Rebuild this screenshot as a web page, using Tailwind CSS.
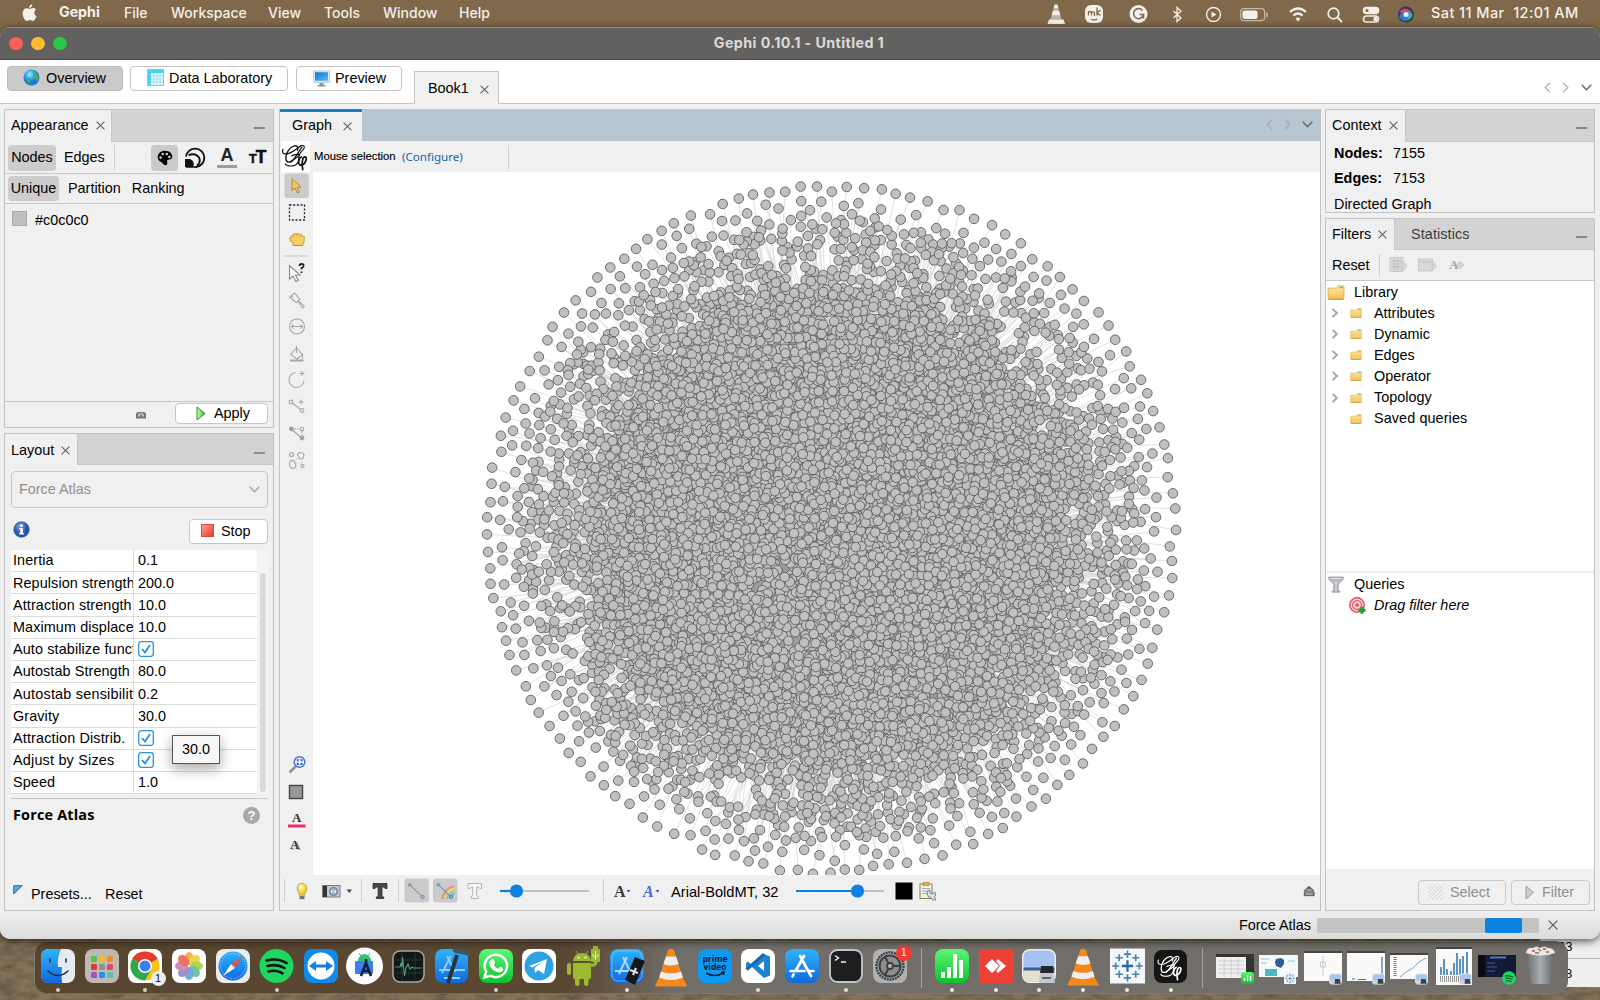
<!DOCTYPE html>
<html lang="en">
<head>
<meta charset="utf-8">
<title>Gephi 0.10.1 - Untitled 1</title>
<script src="https://cdn.jsdelivr.net/npm/@tailwindcss/browser@4"></script>
</head>
<body class="relative flex h-[1000px] w-[1600px] flex-col overflow-hidden bg-[#6e5a41] font-['Liberation_Sans',sans-serif] text-[14.4px] leading-none text-black">

<svg width="0" height="0" class="absolute">
  <defs>
    <filter id="rock" x="0" y="0" width="100%" height="100%"><feTurbulence type="fractalNoise" baseFrequency=".06 .12" numOctaves="4" seed="4"/><feColorMatrix values="0 0 0 0 .12  0 0 0 0 .09  0 0 0 0 .05  1.8 0 0 0 -.6"/></filter>
    <linearGradient id="gSky" x1="0" y1="0" x2="0" y2="1"><stop offset="0" stop-color="#2fb4f8"/><stop offset="1" stop-color="#1068e0"/></linearGradient>
    <linearGradient id="gGreen" x1="0" y1="0" x2="0" y2="1"><stop offset="0" stop-color="#5df777"/><stop offset="1" stop-color="#0cc22c"/></linearGradient>
    <linearGradient id="gFold" x1="0" y1="0" x2="0" y2="1"><stop offset="0" stop-color="#fde9a4"/><stop offset="1" stop-color="#f2c055"/></linearGradient>
    <linearGradient id="gTri" x1="0" y1="0" x2="1" y2="0"><stop offset="0" stop-color="#d2ffb0"/><stop offset="1" stop-color="#35b52a"/></linearGradient>
    <radialGradient id="gGlobe" cx=".4" cy=".3"><stop offset="0" stop-color="#a5ecff"/><stop offset=".55" stop-color="#36a8f2"/><stop offset="1" stop-color="#1b7ad6"/></radialGradient>
    <radialGradient id="gInfo" cx=".4" cy=".3"><stop offset="0" stop-color="#6ea2ee"/><stop offset="1" stop-color="#2450ac"/></radialGradient>
    <linearGradient id="gRed" x1="0" y1="0" x2="1" y2="1"><stop offset="0" stop-color="#ffa79b"/><stop offset="1" stop-color="#ea3020"/></linearGradient>
    <linearGradient id="gScreen" x1="0" y1="0" x2="1" y2="1"><stop offset="0" stop-color="#1a6fd0"/><stop offset="1" stop-color="#4cc4f8"/></linearGradient>
    <radialGradient id="gBulb" cx=".4" cy=".35"><stop offset="0" stop-color="#fffbc0"/><stop offset="1" stop-color="#f0cf2c"/></radialGradient>
    <linearGradient id="gTrash" x1="0" x2="1"><stop offset="0" stop-color="#6c7175"/><stop offset=".5" stop-color="#a8adb0"/><stop offset="1" stop-color="#62676b"/></linearGradient>
    <symbol id="x" viewBox="0 0 10 10"><path d="M.6.600l8.800 8.800M9.400.600L.6 9.400" stroke="#5e5e5e" stroke-width="1.200" fill="none"/></symbol>
    <symbol id="min" viewBox="0 0 12 4"><path d="M0 2h11" stroke="#6d6d6d" stroke-width="1.300"/></symbol>
    <symbol id="chev" viewBox="0 0 8 10"><path d="M1.500.800L6 5 1.500 9.200" stroke="#a2a2a2" stroke-width="1.800" fill="none"/></symbol>
    <symbol id="folder" viewBox="0 0 18 15"><path d="M1 3.500V13.500q0 .8.8.8h14.400q.8 0 .8-.8V1.800q0-1-.9-1h-4.500q-.8 0-1.100 1l-.4 1.300H1.800Q1 3.100 1 3.900z" fill="url(#gFold)" stroke="#dfb04e" stroke-width=".8"/><path d="M1.500 14.300h15" stroke="#c9963a"/><path d="M12.500 2.500h3.500" stroke="#5bb8b0" stroke-width="1.400"/></symbol>
    <symbol id="gephi" viewBox="0 0 30 30"><g fill="none" stroke="currentColor" stroke-linecap="round"><path d="M17 8.500C18 5 16.500 3.500 14 4 9 5 5 11 5 16.500s4 5 7 2.500c3-2.500 6-9 9.500-13.500" stroke-width="1.400"/><path d="M2 7.500c-2 5 3 6 8 3.500S17.500 5.500 20.500 4c2.500-1 4 0 3.500 2-.8 3-5 4-5.500 9 0 4-1.500 8-4 9-4 1.500-9.500 1-10-1.500" stroke-width="1.200"/><path d="M11 14.500c3-2 6-1.500 7.500-1.800M10 21c3-3.500 7-4.500 9-7.500" stroke-width="1.100"/><path d="M21 15.500c-3 1-4 8.500-.5 8.500 4.500 0 7.500-8.500 4.300-8.500-2.800 0-3.800 7-2.300 13" stroke-width="1.800"/></g></symbol>
    <symbol id="vlc" viewBox="0 0 34 40"><path d="M5 31h24l4 7.500q.3 1-.8 1H1.800q-1.100 0-.8-1z" fill="#f38a1b"/><path d="M14 3q3-2.500 6 0l9.500 30q-12 6.500-25 0z" fill="#f5881c"/><path d="M12 9.500h10l2.700 7.500q-7.500 3-15.300 0zM7 24.500q10 4 20 0l2 6q-12 5-24 0z" fill="#efeeec"/></symbol>
    <symbol id="pv" viewBox="0 0 14 12"><rect x=".5" y=".5" width="13" height="11" rx="2.500" fill="#a9c4ee" stroke="#dfe6f0"/><path d="M1 7.500h12v3H1z" fill="#d8d5cf"/><path d="M6.500 6h5l1 5H6z" fill="#3a414c"/></symbol>
    <symbol id="tab" viewBox="0 0 34 34"><g stroke="#2b6a9e" stroke-width="2.200"><path d="M17 11.500v11M11.500 17h11"/><g stroke-width="1.600" stroke="#4484b5"><path d="M17 2v7M13.500 5.500h7M17 25v7M13.500 28.500h7M5.500 13.500v7M2 17h7M28.500 13.500v7M25 17h7M9 5.500v7M5.500 9h7M25 5.500v7M21.500 9h7M9 21.500v7M5.500 25h7M25 21.500v7M21.500 25h7"/></g></g></symbol>
  </defs>
</svg>
<svg class="absolute inset-0 -z-0" width="1600" height="1000"><rect width="1600" height="1000" fill="#7d684a"/><rect y="935" width="1600" height="65" fill="#86735a"/><rect y="935" width="1600" height="65" filter="url(#rock)"/></svg>

<!-- menu bar -->
<header class="relative flex h-[27px] shrink-0 items-center bg-[#80684a] pb-[2px] font-['Inter',sans-serif] text-[14px] font-medium text-[#f4f0ea]">
  <div class="flex w-[59px] pl-[22px]"><svg width="15" height="18" viewBox="0 0 15 18" fill="#f4f0ea"><path d="M10.300.2c.1 1.900-1.400 3.700-3.200 3.700C6.900 2.100 8.500.4 10.300.2zM7.500 4.900c.9 0 1.800-.9 3.400-.9 1.200 0 2.400.6 3.200 1.700-2.700 1.600-2.300 5.400.5 6.500-.8 2.100-2.200 4.600-3.700 4.700-1.200 0-1.600-.8-3-.8-1.500 0-1.900.8-3 .8C3 16.900.6 12.700.6 9.500.6 6 2.700 4.200 4.700 4.200c1.300 0 2 .7 2.800.7z"/></svg></div>
  <span class="w-[65px] text-[14.200px] font-bold">Gephi</span><span class="w-[47px]">File</span><span class="w-[97px]">Workspace</span><span class="w-[56px]">View</span><span class="w-[59px]">Tools</span><span class="w-[76px]">Window</span><span class="w-[587px]">Help</span>
  <svg width="372" height="24" viewBox="1046 -1 372 24" fill="none" stroke="#f4f0ea" stroke-width="1.500">
    <g fill="#f4f0ea" stroke="none"><path d="M1054.500 2.500h3l1 4h-5zM1052.800 9h6.400l1.300 4.500h-9zM1049 17.500h14.500l1.500 4.500h-17.500z"/><path d="M1053.500 6.500h5l.7 2.500h-6.400zM1051.500 13.500h9l1 4h-11z" opacity=".55"/><rect x="1085" y="3" width="18" height="18" rx="6"/><circle cx="1138.500" cy="12" r="9"/></g>
    <path d="M1088.500 13.500v-4.500m0 1.500q3-2.500 3 .5v2.500m0-2.500q3-2.500 3 .5v2.500M1097 5.500v8m3.500-5.500l-3.500 3 3.500 2.500M1091 17q3 2 6.500 0" stroke="#80684a" stroke-width="1.300"/>
    <path d="M1142.500 8.500a5 5 0 1 0 1 4h-4M1143.500 12.500v4" stroke="#80684a" stroke-width="1.500"/>
    <path d="M1173.500 9l7.500 7-4 3.500V5.500l4 3.500-7.500 7" stroke-width="1.300"/>
    <circle cx="1213.500" cy="12.500" r="7" stroke-width="1.400"/><path d="M1211.500 9.500v6l5-3z" fill="#f4f0ea" stroke="none"/>
    <rect x="1240.700" y="6.700" width="24" height="12" rx="3.500" stroke="#c5b8a6" stroke-width="1.200"/><rect x="1242.500" y="8.500" width="15" height="8.500" rx="2" fill="#f4f0ea" stroke="none"/><path d="M1267 10.500v4.500" stroke="#c5b8a6"/>
    <g stroke-width="2.200"><path d="M1290 10q8-7 16 0M1293.300 13.500q4.700-4 9.400 0"/></g><path d="M1295.500 16.500l2.500 3 2.500-3q-2.500-1.800-5 0z" fill="#f4f0ea" stroke="none"/>
    <circle cx="1333.500" cy="11.500" r="5.300" stroke-width="1.700"/><path d="M1337.500 15.500l4.500 4.500" stroke-width="2"/>
    <rect x="1363.500" y="5.500" width="15" height="6" rx="3" fill="#f4f0ea"/><circle cx="1367" cy="8.500" r="1.600" fill="#80684a" stroke="none"/><rect x="1363.500" y="14" width="15" height="6" rx="3"/><circle cx="1375.500" cy="17" r="2.200" fill="#f4f0ea" stroke="none"/>
    <g stroke="none"><circle cx="1406" cy="12.500" r="8" fill="#3a3560"/><path d="M1399 10q6-7 13 0-5 3-13 0z" fill="#c84a78"/><path d="M1399 15q2-6 7-3 5 4 1 7-5 1-8-4z" fill="#2a7fd0"/><path d="M1407 11q5-2 5.500 2-1 4-4.500 5z" fill="#37b3a0"/><circle cx="1406" cy="12.500" r="2.500" fill="#d7f4ff"/></g>
  </svg>
  <span class="ml-[13px] whitespace-pre pt-[1px] text-[14.500px] tracking-[.42px]">Sat 11 Mar  12:01 AM</span>
</header>

<!-- application window -->
<div class="relative z-10 flex h-[912px] shrink-0 flex-col overflow-hidden rounded-[10px] bg-[#f0f0f0] shadow-[0_2px_8px_rgba(0,0,0,.7)]">
  <div class="relative flex h-[33px] shrink-0 items-center justify-center border-y border-t-[#8f8c88] border-b-[#4d4c4a] bg-[#62615f]">
    <div class="absolute left-[9px] flex gap-[8.500px]"><i class="size-[13.500px] rounded-full bg-[#fe5f57]"></i><i class="size-[13.500px] rounded-full bg-[#febb2e]"></i><i class="size-[13.500px] rounded-full bg-[#28c840]"></i></div>
    <span class="pb-[1px] pr-[2px] font-['Inter',sans-serif] text-[14.300px] font-bold tracking-[.4px] text-[#dcdbda]">Gephi 0.10.1 - Untitled 1</span>
  </div>
  <div class="flex h-[44px] shrink-0 items-start border-b border-[#c6c6c6] bg-white pl-[7px] pt-[6px]">
    <div class="mr-[7px] flex h-[25px] w-[116px] items-center gap-[6px] rounded-[4px] border border-[#bdbdbd] bg-[#cacaca] pl-[15px]"><svg class="mb-[2px]" width="17" height="17" viewBox="0 0 17 17"><circle cx="8.500" cy="8.500" r="8" fill="url(#gGlobe)"/><path d="M11 3.500q3 .5 4 3.500t-1 5.500L12.500 9.500l-2-1-.5-3zM4 9l2.500.5 1 2.500-1 2.500Q3 13 4 9z" fill="#45b53f"/></svg>Overview</div>
    <div class="mr-[8px] flex h-[25px] w-[158px] items-center gap-[5px] rounded-[4px] border border-[#c4c4c4] pl-[16px]"><svg class="mb-[2px]" width="17" height="17" viewBox="0 0 17 17"><rect x=".5" y=".5" width="16" height="16" fill="#e9fbff" stroke="#9ac0cc"/><path d="M1 1h15v3H1zM1 1h3v15H1z" fill="#46d3f4"/><path d="M4 7h12M4 10h12M4 13h12M7 4v12M10 4v12M13 4v12" stroke="#8bdcee" stroke-width=".8"/></svg>Data Laboratory</div>
    <div class="flex h-[25px] w-[106px] items-center gap-[5px] rounded-[4px] border border-[#c4c4c4] pl-[16px]"><svg class="mb-[1px]" width="17" height="17" viewBox="0 0 17 17"><rect x=".5" y="1" width="16" height="11.500" fill="#dfe4e8" stroke="#b4bcc4" stroke-width=".7"/><path d="M2 2.300h13v8.500H2z" fill="url(#gScreen)"/><path d="M6.500 13h4v2h2v1.500h-8V15h2z" fill="#8f969c"/></svg>Preview</div>
    <div class="mb-[-1px] ml-[12px] flex h-[33px] w-[85px] items-center gap-[11px] self-end border border-b-0 border-[#c6c6c6] bg-[#f0f0f0] pl-[13px]">Book1<svg class="mt-[2px]" width="9" height="9"><use href="#x"/></svg></div>
    <div class="ml-auto mr-[8px] mt-[16px] flex items-center gap-[11px]"><svg width="7" height="11" fill="none" stroke="#b3b3b3" stroke-width="1.300"><path d="M6 .7L1.200 5.500 6 10.300"/></svg><svg width="7" height="11" fill="none" stroke="#b3b3b3" stroke-width="1.300"><path d="M1 .7l4.800 4.800L1 10.300"/></svg><svg class="ml-[1px]" width="11" height="7" fill="none" stroke="#6a6a6a" stroke-width="1.400"><path d="M.7.800l4.800 5 4.800-5"/></svg></div>
  </div>

  <main class="flex h-[807px] shrink-0 gap-[5px] pl-[4px] pt-[5px]">
    <!-- left column -->
    <div class="flex w-[270px] flex-col gap-[5px]">
      <section class="flex h-[319px] flex-col border border-[#c3c3c3]">
        <div class="flex h-[32px] shrink-0 items-stretch border-b border-[#c8c8c8] bg-[#d3d3d3]"><div class="mb-[-1px] flex w-[107px] items-center gap-[7px] border-r border-[#c8c8c8] bg-[#f0f0f0] pb-[2px] pl-[6px]">Appearance<svg class="mt-[1px]" width="9" height="9"><use href="#x"/></svg></div><svg class="ml-auto mr-[7px] mt-[16px]" width="12" height="4"><use href="#min"/></svg></div>
        <div class="flex h-[32px] shrink-0 items-center border-b border-[#c8c8c8]">
          <span class="ml-[3px] flex h-[26px] w-[48px] items-center justify-center rounded-[4px] bg-[#cdcdcd]">Nodes</span><span class="ml-[8px] w-[50px]">Edges</span><i class="h-[25px] w-px bg-[#cfcfcf]"></i>
          <span class="ml-[36px] flex h-[26px] w-[27px] items-center justify-center rounded-[4px] bg-[#cacaca]"><svg width="16" height="16" viewBox="0 0 16 16"><path d="M8 .8c4.500 0 7.300 2.800 7.300 6 0 2.500-2.500 2.700-4.200 3-1.300.2-.8 1.600-.8 3.200 0 3-3.300 2.500-4.300.8C4.500 11.500.7 11.300.7 7 .7 3.500 3.800.8 8 .8z" fill="#000"/><g fill="#ddd"><circle cx="3.500" cy="7.500" r="1.200"/><circle cx="5.700" cy="4" r="1.200"/><circle cx="9.800" cy="4" r="1.200"/><circle cx="12.400" cy="7" r="1.200"/></g></svg></span>
          <svg class="ml-[6px]" width="22" height="22" viewBox="0 0 22 22" fill="none" stroke="#111" stroke-width="1.900"><path d="M2 9.500a9.200 9.200 0 1 1 9.500 10.500"/><path d="M4.500 8q8-2.500 11 3.500 1 4.500-2.500 7"/><path d="M1 20v-8h5q5 2 3.500 8z" fill="#111" stroke="none"/><path d="M2 20h11" stroke-width="1.500"/></svg>
          <span class="ml-[11px] flex w-[20px] flex-col items-center text-[18px] font-bold leading-[14px] text-[#222]">A<i class="mt-[3px] h-[3px] w-[20px] bg-[#9c9c9c]"></i></span>
          <span class="ml-[12px] flex items-baseline pt-[1px] font-bold text-[#111]"><b class="text-[12.500px] [-webkit-text-stroke:.5px_#111]">T</b><b class="ml-[-1px] text-[17.500px] [-webkit-text-stroke:.5px_#111]">T</b></span>
        </div>
        <div class="flex h-[30px] shrink-0 items-center border-b border-[#c8c8c8]"><span class="ml-[3px] flex h-[25px] w-[51px] items-center justify-center rounded-[4px] bg-[#cdcdcd]">Unique</span><span class="ml-[9px]">Partition</span><span class="ml-[11px]">Ranking</span></div>
        <div class="flex flex-1 items-start pl-[7px] pt-[7px]"><i class="mr-[8px] size-[15px] border border-[#aaa] bg-[#c0c0c0]"></i><span class="pt-[2px]">#c0c0c0</span></div>
        <div class="flex h-[26px] shrink-0 items-center border-t border-[#c8c8c8] pb-[2px]">
          <svg class="ml-[130px] mt-[3px]" width="12" height="8" viewBox="0 0 12 8"><path d="M1 7.500V3.500q0-2.500 2.500-2.500h5Q11 1 11 3.500v4z" fill="#777"/><path d="M3 4.800h2M7 4.800h2M3.500 3h5" stroke="#eee"/></svg>
          <span class="ml-[28px] flex h-[21px] w-[93px] items-center gap-[8px] rounded-[4px] border border-[#c6c6c6] bg-white pl-[20px]"><svg width="10" height="15"><path d="M1 1l8 6.500L1 14z" fill="url(#gTri)" stroke="#2f8f28"/></svg>Apply</span>
        </div>
      </section>

      <section class="relative flex h-[478px] flex-col border border-[#c3c3c3]">
        <div class="flex h-[31px] shrink-0 items-stretch border-b border-[#c8c8c8] bg-[#d3d3d3]"><div class="mb-[-1px] flex w-[73px] items-center gap-[7px] border-r border-[#c8c8c8] bg-[#f0f0f0] pl-[6px] pt-[1px]">Layout<svg width="9" height="9"><use href="#x"/></svg></div><svg class="ml-auto mr-[7px] mt-[17px]" width="12" height="4"><use href="#min"/></svg></div>
        <div class="ml-[6px] mt-[6px] flex h-[37px] w-[257px] shrink-0 items-center justify-between rounded-[4px] border border-[#c9c9c9] pl-[7px] pr-[7px] text-[#8f8f8f]">Force Atlas<svg width="11" height="7" fill="none" stroke="#a5a5a5" stroke-width="1.400"><path d="M.7.800l4.800 5 4.800-5"/></svg></div>
        <div class="mt-[11px] flex h-[25px] w-[263px] shrink-0 items-center justify-between pl-[8px]"><svg class="mb-[4px]" width="17" height="17" viewBox="0 0 17 17"><circle cx="8.500" cy="8.500" r="7.700" fill="url(#gInfo)" stroke="#2a4f9a" stroke-width=".8"/><path d="M7 3.500h3v2.200H7zM6 7h4v5.300h1.200v1.200H6v-1.200h1.200V8.200H6z" fill="#fff"/></svg><span class="flex h-[25px] w-[79px] items-center gap-[7px] rounded-[4px] border border-[#c6c6c6] bg-white pl-[11px]"><svg class="mb-[2px]" width="13" height="13"><rect x=".5" y=".5" width="12" height="12" fill="url(#gRed)" stroke="#d0503f"/></svg>Stop</span></div>
        <div class="mt-[6px] flex h-[244px] shrink-0 pl-[6px]">
          <div class="flex w-[246px] flex-col bg-white">
            <div class="flex h-[22.200px] items-center border-b border-[#dcdcdc]"><span class="flex h-full w-[123px] items-center overflow-hidden whitespace-nowrap border-r border-[#dcdcdc] pl-[2px] tracking-[.1px]">Inertia</span><span class="pl-[4px]">0.1</span></div>
            <div class="flex h-[22.200px] items-center border-b border-[#dcdcdc]"><span class="flex h-full w-[123px] items-center overflow-hidden whitespace-nowrap border-r border-[#dcdcdc] pl-[2px] tracking-[.1px]">Repulsion strength</span><span class="pl-[4px]">200.0</span></div>
            <div class="flex h-[22.200px] items-center border-b border-[#dcdcdc]"><span class="flex h-full w-[123px] items-center overflow-hidden whitespace-nowrap border-r border-[#dcdcdc] pl-[2px] tracking-[.1px]">Attraction strength</span><span class="pl-[4px]">10.0</span></div>
            <div class="flex h-[22.200px] items-center border-b border-[#dcdcdc]"><span class="flex h-full w-[123px] items-center overflow-hidden whitespace-nowrap border-r border-[#dcdcdc] pl-[2px] tracking-[.1px]">Maximum displacement</span><span class="pl-[4px]">10.0</span></div>
            <div class="flex h-[22.200px] items-center border-b border-[#dcdcdc]"><span class="flex h-full w-[123px] items-center overflow-hidden whitespace-nowrap border-r border-[#dcdcdc] pl-[2px] tracking-[.12px]">Auto stabilize function</span><svg class="ml-[4px]" width="16" height="16" fill="none" stroke="#2a93dc"><rect x=".7" y=".7" width="14.600" height="14.600" rx="2.500" stroke-width="1.300" fill="#fff"/><path d="M4 8l3 3.500L12 4" stroke-width="1.900"/></svg></div>
            <div class="flex h-[22.200px] items-center border-b border-[#dcdcdc]"><span class="flex h-full w-[123px] items-center overflow-hidden whitespace-nowrap border-r border-[#dcdcdc] pl-[2px] tracking-[.1px]">Autostab Strength</span><span class="pl-[4px]">80.0</span></div>
            <div class="flex h-[22.200px] items-center border-b border-[#dcdcdc]"><span class="flex h-full w-[123px] items-center overflow-hidden whitespace-nowrap border-r border-[#dcdcdc] pl-[2px] tracking-[.22px]">Autostab sensibility</span><span class="pl-[4px]">0.2</span></div>
            <div class="flex h-[22.200px] items-center border-b border-[#dcdcdc]"><span class="flex h-full w-[123px] items-center overflow-hidden whitespace-nowrap border-r border-[#dcdcdc] pl-[2px] tracking-[.1px]">Gravity</span><span class="pl-[4px]">30.0</span></div>
            <div class="flex h-[22.200px] items-center border-b border-[#dcdcdc]"><span class="flex h-full w-[123px] items-center overflow-hidden whitespace-nowrap border-r border-[#dcdcdc] pl-[2px] tracking-[.15px]">Attraction Distrib.</span><svg class="ml-[4px]" width="16" height="16" fill="none" stroke="#2a93dc"><rect x=".7" y=".7" width="14.600" height="14.600" rx="2.500" stroke-width="1.300" fill="#fff"/><path d="M4 8l3 3.500L12 4" stroke-width="1.900"/></svg></div>
            <div class="flex h-[22.200px] items-center border-b border-[#dcdcdc]"><span class="flex h-full w-[123px] items-center overflow-hidden whitespace-nowrap border-r border-[#dcdcdc] pl-[2px] tracking-[.2px]">Adjust by Sizes</span><svg class="ml-[4px]" width="16" height="16" fill="none" stroke="#2a93dc"><rect x=".7" y=".7" width="14.600" height="14.600" rx="2.500" stroke-width="1.300" fill="#fff"/><path d="M4 8l3 3.500L12 4" stroke-width="1.900"/></svg></div>
            <div class="flex h-[22.200px] items-center border-b border-[#dcdcdc]"><span class="flex h-full w-[123px] items-center overflow-hidden whitespace-nowrap border-r border-[#dcdcdc] pl-[2px] tracking-[.1px]">Speed</span><span class="pl-[4px]">1.0</span></div>
          </div>
          <div class="flex w-[11px] justify-center bg-[#f4f4f4] pb-[2px] pt-[23px]"><i class="w-[6px] rounded-full bg-[#dadada]"></i></div>
        </div>
        <div class="ml-[6px] mt-[4px] h-px w-[257px] shrink-0 bg-[#c6c6c6]"></div>
        <div class="flex h-[32px] w-[256px] shrink-0 items-center justify-between pl-[8px] font-['Open_Sans',sans-serif] text-[14.400px] font-bold tracking-[.2px]">Force Atlas<span class="mr-[1px] flex size-[17px] items-center justify-center rounded-full bg-[#a9a9a9] font-['Liberation_Sans'] text-[13px] text-white">?</span></div>
        <div class="mb-[6px] mt-auto flex items-center pl-[8px]"><svg class="mb-[9px] mr-[8px]" width="10" height="10"><path d="M.7.700h8.500L.7 9z" fill="#5aa9e6" stroke="#2c6fa8"/></svg><span class="w-[74px]">Presets...</span><span>Reset</span></div>
        <div class="absolute left-[167px] top-[301px] flex h-[29px] w-[48px] items-center justify-center border border-[#555] bg-[#f7f7f7] shadow-[0_5px_14px_rgba(0,0,0,.35)]">30.0</div>
      </section>
    </div>

    <!-- graph panel -->
    <section class="flex w-[1042px] flex-col border border-[#c3c3c3] border-t-0">
      <div class="flex h-[32px] shrink-0 bg-[#b8c6d2]"><div class="flex w-[82px] items-center gap-[11px] border-t-[3px] border-[#1482c5] bg-[#f0f0f0] pb-[2px] pl-[12px]">Graph<svg class="mt-[1px]" width="9" height="9"><use href="#x"/></svg></div>
        <div class="ml-auto mr-[7px] flex items-center gap-[11px] pb-[1px]"><svg width="7" height="11" fill="none" stroke="#a3adb6" stroke-width="1.300"><path d="M6 .7L1.200 5.500 6 10.300"/></svg><svg width="7" height="11" fill="none" stroke="#a3adb6" stroke-width="1.300"><path d="M1 .7l4.800 4.800L1 10.300"/></svg><svg width="11" height="7" fill="none" stroke="#5f666d" stroke-width="1.400"><path d="M.7.800l4.800 5 4.800-5"/></svg></div></div>
      <div class="flex h-[31px] shrink-0 items-center font-['Noto_Sans',sans-serif] text-[11.600px]"><span class="ml-[1px] flex h-[31px] w-[29px] bg-white text-[#111]"><svg width="29" height="31"><use href="#gephi"/></svg></span><span class="ml-[4px] w-[88px] whitespace-nowrap font-['Liberation_Sans'] text-[11.300px] [-webkit-text-stroke:.15px_#000]">Mouse selection</span><span class="text-[#1464ae]">(Configure)</span><i class="ml-auto mr-[811px] h-[24px] w-px bg-[#cfcfcf]"></i></div>
      <div class="flex h-[703px] shrink-0">
        <div class="w-[33px]">
          <svg width="33" height="703" viewBox="280 172 33 703" fill="none" stroke="#a6a6a6" stroke-width="1.100">
            <rect x="284.500" y="173.500" width="24.500" height="24.500" rx="3" fill="#cbcbcb" stroke="none"/>
            <path d="M292 178.500v12l3-2.500 2.500 5 2-1-2.300-4.800h3.800z" fill="#f3c46c" stroke="#a9822f" stroke-width=".9"/>
            <rect x="289.500" y="205" width="15" height="15" stroke="#222" stroke-width="1.300" stroke-dasharray="2 1.700"/>
            <path d="M293 245.500v-3l-2.500-1.500q-1.500-2 .3-3.500l.2-1.500 2-.5.8-1.700 2.500.3 1.400-.6 1.600.9 2 .2.700 1.300 2.300 1-.3 5-1.800 3.600z" fill="#f8cf68" stroke="#d49f35"/><path d="M294 236v2M297 235.500v2M300 236v2" stroke="#d49f35" stroke-width=".8"/><path d="M294 245.500h8.500" stroke="#b98a2b"/>
            <path d="M284.500 256h24.500" stroke="#c9c9c9"/>
            <path d="M289.500 265.500v13.500l3.500-3 3 5.500 2.500-1.300-3-5.200h4.500z" fill="#fff" stroke="#8a8a8a"/><path d="M299.500 266q0-2 2-2 2.500 0 2 2 0 1.500-2 2v1.500M301.500 271.500v1.500" stroke="#222" stroke-width="1.800"/>
            <path d="M289.500 297.500l5-4.500 5.500 6.500-3.500 3zM291.500 295.800l1.500 2.200M298.500 300.800l5.500 5q.5 1.500-1.500 2l-4.300-6"/>
            <circle cx="297" cy="326.500" r="7.500"/><path d="M291.500 326.500h11M293.500 324.300l-2 2.200 2 2.200M300.500 324.300l2 2.200-2 2.200"/>
            <path d="M290.500 354.500l6-6.500 6 6.500-5.500 4.500zM296.500 346v7M302.500 354.500v4"/><path d="M290 360.500h13.500" stroke-width="2"/>
            <path d="M295.500 372.500a7.500 7.500 0 1 0 8.500 8M302 371v5M299.500 373.500h5"/>
            <circle cx="291" cy="402" r="1.900"/><circle cx="302" cy="410.500" r="1.900"/><path d="M292.500 403.300l8 6M301 399.500v5M298.500 402h5"/>
            <circle cx="291.500" cy="429" r="1.900" fill="#999"/><circle cx="302" cy="438" r="1.900" fill="#999"/><circle cx="302" cy="429" r="1.700"/><path d="M294.500 429h5M302 431v5" stroke-dasharray="2 1.200"/><path d="M292.500 430l9 8"/>
            <circle cx="291.500" cy="454.500" r="2"/><circle cx="302.500" cy="466" r="1.500"/><path d="M297.500 455q1-3 3.500-2.500 3 0 3 3-.5 3.500-3 3.500t-2-2zM289.500 463q1-3 3.500-2.500 2.500.5 2 3 2 2.500-.5 4.500-3 1-4.500-1zM296.500 458.500v.8M299 462.500v.8M296.500 463.500v.8M302 462v.8"/>
            <circle cx="299.500" cy="762" r="5.300" stroke="#4a6fd0" stroke-width="1.500" fill="#eaf0ff"/><path d="M295.500 766.500l-6 6" stroke="#8f959c" stroke-width="2.600"/><path d="M297.500 761.300v-1.500h1.500M300.300 759.800h1.500v1.500M301.800 762.800v1.500h-1.500M299 764.300h-1.500v-1.500" stroke="#2d4fc0" stroke-width="1.300"/>
            <rect x="289.500" y="785.500" width="13" height="13" fill="#9a9a9a" stroke="#3f3f3f" stroke-width="1.400"/>
            <path d="M288 826h17.500" stroke="#ee2c72" stroke-width="3"/>
            <g stroke="none" fill="#333" font-family="Liberation Serif" font-weight="bold" font-size="13"><text x="292" y="822">A</text><text x="292" y="850" fill="#bbb">A</text><text x="290" y="849">A</text></g>
          </svg>
        </div>
        <canvas id="graph" class="bg-white" width="1007" height="703"></canvas>
      </div>
      <div class="flex flex-1 items-start bg-[#f0f0f0]">
        <svg width="1040" height="34" viewBox="280 875 1040 34" fill="none" stroke="#cfcfcf">
          <path d="M284.500 879v23M361.500 879v23M398.500 879v23M603.500 879v23"/>
          <rect x="404.500" y="878.500" width="24.500" height="24" rx="3" fill="#cbcbcb" stroke="none"/><rect x="433" y="878.500" width="24.500" height="24" rx="3" fill="#cbcbcb" stroke="none"/>
          <path d="M299.300 895q-.2-2-1.400-4-2.500-6.500 4-8 6.800 1.500 4.200 8-1.200 2-1.400 4z" fill="url(#gBulb)" stroke="#b59a2c" stroke-width=".8"/><path d="M299.500 895.800h5v3.400h-5z" fill="#777" stroke="none"/>
          <rect x="322.500" y="885.500" width="17.500" height="11.500" fill="#c6c8cc" stroke="#777b80"/><path d="M323 886h4v11h-4z" fill="#333" stroke="none"/><circle cx="333.500" cy="891.500" r="4" fill="#a5b1c6" stroke="#5e6f8f"/><path d="M331.500 893v-2.500l2 1.500 2-1.500v2.500" stroke="#eef"/><path d="M346.500 889.500h5.500l-2.700 3.500z" fill="#3d4650" stroke="none"/>
          <path d="M373 883.500h14v5h-2q0-1.500-2-1.500h-1v8.500q0 1.500 1.800 1.500v1.500h-7.500V897q1.800 0 1.800-1.500V887h-1q-2 0-2 1.500H373z" fill="#4a4a4a" stroke="#2a2a2a" stroke-width=".8"/>
          <path d="M468 883.500h13.500v5h-2q0-1.500-2-1.500h-.8v8.300q0 1.200 1.500 1.200v2h-7v-2q1.500 0 1.500-1.200V887h-.8q-2 0-2 1.500H468z" fill="#f6f6f6" stroke="#b5b5b5"/>
          <g stroke="#4f86c0"><path d="M411 886l11 10.500"/><circle cx="409.800" cy="884.800" r="1.300"/><circle cx="422.500" cy="897" r="1.600"/></g>
          <g stroke-width="1.900"><path d="M442.500 899q1-10 11.500-13" stroke="#e88f84"/><path d="M444.700 899q1-8.500 9.800-10.500" stroke="#efcf7a"/><path d="M447 899q.8-6.500 8-8" stroke="#8fce85"/><path d="M449.500 899q.6-4.500 5.500-5" stroke="#85ade2"/></g><g stroke="#4f86c0"><path d="M439.500 886l11 10.500"/><circle cx="438.300" cy="884.800" r="1.300"/><circle cx="451" cy="897" r="1.600"/></g>
          <path d="M517 891h72" stroke="#c3c3c3" stroke-width="2"/><path d="M500 891h16" stroke="#0d82dd" stroke-width="2.200"/><circle cx="516.500" cy="891" r="6.600" fill="#0d82e0" stroke="none"/>
          <path d="M858 891h26" stroke="#c3c3c3" stroke-width="2"/><path d="M796 891h61" stroke="#0d82dd" stroke-width="2.200"/><circle cx="857.500" cy="891" r="6.600" fill="#0d82e0" stroke="none"/>
          <g stroke="none" font-family="Liberation Serif" font-weight="bold" font-size="16"><text x="614" y="897" fill="#3a3a3a">A</text><text x="643" y="897" fill="#4a6ad0" font-style="italic">A</text></g>
          <path d="M626.500 890h4l-2 2.500zM655.500 890h4l-2 2.500z" fill="#3852b5" stroke="none"/>
          <text x="671" y="896.500" fill="#000" stroke="none" font-size="14.200" textLength="107.500" lengthAdjust="spacingAndGlyphs">Arial-BoldMT, 32</text>
          <path d="M895.500 882.500h17v17h-17z" fill="#000" stroke="none"/>
          <rect x="920" y="884" width="12" height="14.500" fill="#f4f1e4" stroke="#8a7a55"/><path d="M923 882.500h6v3h-6z" fill="#e8b13c" stroke="#a9822f" stroke-width=".7"/><path d="M922 888.500h8M922 891h6M922 893.500h5" stroke="#9ab"/><path d="M927 891.500l3-1.500 0 3 2.500 1 2.500-2 .5 3-1 2 1.500 3h-3.500l-1.500-2.500-3-1z" fill="#dfe4e8" stroke="#6f7a84" stroke-width=".9"/>
          <path d="M1304 890.500l5-4.500 5 4.500v1h-10zM1304 892.300h10.500v3q0 .7-.8.700h-9q-.7 0-.7-.7z" fill="#666" stroke="#666" stroke-width=".4"/><path d="M1305.500 894h7M1306.500 890h5" stroke="#ddd"/>
        </svg>
      </div>
    </section>

    <!-- right column -->
    <div class="ml-[-1px] flex w-[270px] flex-col gap-[5px]">
      <section class="flex h-[104px] flex-col border border-[#c3c3c3]">
        <div class="flex h-[32px] shrink-0 items-stretch border-b border-[#c8c8c8] bg-[#d3d3d3]"><div class="mb-[-1px] flex w-[80px] items-center gap-[7px] border-r border-[#c8c8c8] bg-[#f0f0f0] pb-[2px] pl-[6px]">Context<svg class="mt-[1px]" width="9" height="9"><use href="#x"/></svg></div><svg class="ml-auto mr-[6px] mt-[16px]" width="12" height="4"><use href="#min"/></svg></div>
        <div class="flex flex-col gap-[11px] pl-[8px] pt-[4px]"><div class="flex"><b class="w-[59px]">Nodes:</b>7155</div><div class="flex"><b class="w-[59px]">Edges:</b>7153</div><div>Directed Graph</div></div>
      </section>
      <section class="flex h-[693px] flex-col border border-[#c3c3c3]">
        <div class="flex h-[31px] shrink-0 items-stretch border-b border-[#c8c8c8] bg-[#d3d3d3]"><div class="mb-[-1px] flex w-[69px] items-center gap-[7px] border-r border-[#c8c8c8] bg-[#f0f0f0] pb-[1px] pl-[6px]">Filters<svg class="mt-[1px]" width="9" height="9"><use href="#x"/></svg></div><span class="ml-[16px] self-center pt-[1px] tracking-[.1px] text-[#3c3c3c]">Statistics</span><svg class="ml-auto mr-[6px] mt-[16px]" width="12" height="4"><use href="#min"/></svg></div>
        <div class="flex h-[31px] shrink-0 items-center border-b border-[#c8c8c8] pl-[6px]"><span class="w-[47px]">Reset</span><i class="h-[23px] w-px bg-[#cfcfcf]"></i>
          <svg class="ml-[9px]" width="78" height="18" viewBox="0 0 78 18" fill="#dadada" stroke="#c9c9c9"><path d="M1 1.500h13v14H1zM12 6h2.500l3.500 4-3.500 4H12zM29.500 3h14v12h-14zM42 6h2l3.500 4-3.500 4h-2z"/><path d="M3 5h9M3 8h8M3 11h8M5.500 3v11M9 3v11M30 6h13" stroke="#c0c0c0"/><path d="M68 7.500h3V5l4 4-4 4v-2.500h-3z"/><text x="60" y="13" font-family="Liberation Serif" font-weight="bold" font-size="13" fill="#a6a6a6" stroke="none">A</text></svg>
        </div>
        <div class="flex h-[290px] shrink-0 flex-col bg-white pt-[.5px]">
          <div class="flex h-[21.100px] items-center pl-[1px]"><svg class="mr-[9px]" width="18" height="15"><use href="#folder"/></svg>Library</div>
          <div class="flex h-[21.100px] items-center pl-[5px]"><svg class="mr-[11px]" width="8" height="10"><use href="#chev"/></svg><svg class="mr-[12px]" width="12" height="10"><use href="#folder"/></svg>Attributes</div>
          <div class="flex h-[21.100px] items-center pl-[5px]"><svg class="mr-[11px]" width="8" height="10"><use href="#chev"/></svg><svg class="mr-[12px]" width="12" height="10"><use href="#folder"/></svg>Dynamic</div>
          <div class="flex h-[21.100px] items-center pl-[5px]"><svg class="mr-[11px]" width="8" height="10"><use href="#chev"/></svg><svg class="mr-[12px]" width="12" height="10"><use href="#folder"/></svg>Edges</div>
          <div class="flex h-[21.100px] items-center pl-[5px]"><svg class="mr-[11px]" width="8" height="10"><use href="#chev"/></svg><svg class="mr-[12px]" width="12" height="10"><use href="#folder"/></svg>Operator</div>
          <div class="flex h-[21.100px] items-center pl-[5px]"><svg class="mr-[11px]" width="8" height="10"><use href="#chev"/></svg><svg class="mr-[12px]" width="12" height="10"><use href="#folder"/></svg>Topology</div>
          <div class="flex h-[21.100px] items-center pl-[24px]"><svg class="mr-[12px]" width="12" height="10"><use href="#folder"/></svg><span class="tracking-[.1px]">Saved queries</span></div>
        </div>
        <div class="h-[2px] shrink-0 bg-[#ededed]"></div>
        <div class="flex h-[296px] shrink-0 flex-col bg-white pt-[1px]">
          <div class="flex h-[21.100px] items-center pl-[2px]"><svg class="mr-[10px]" width="16" height="17" viewBox="0 0 16 17"><path d="M.8 1h14.400v2q-.8 1.500-5 5v7h1.500v1.200H4.300V15h1.500V8Q1.600 4.500.8 3z" fill="#b5b7c0" stroke="#92949c" stroke-width=".8"/><path d="M2.500 2.500h11M8 5v10" stroke="#e6e7ee"/></svg>Queries</div>
          <div class="flex h-[21.100px] items-center pl-[23px] italic"><svg class="mr-[8px]" width="17" height="17" viewBox="0 0 17 17"><circle cx="8" cy="8" r="7.200" fill="#fbd3d5" stroke="#e4505c" stroke-width="1.500"/><circle cx="8" cy="8" r="4.500" fill="none" stroke="#ea6b76" stroke-width="1.500"/><circle cx="8" cy="8" r="1.800" fill="#e4505c"/><path d="M13 9.700v7M9.500 13.200h7" stroke="#1e9e2c" stroke-width="3"/></svg>Drag filter here</div>
        </div>
        <div class="flex flex-1 items-center justify-end gap-[5px] pr-[4px] pt-[7px] pb-[1px] text-[#8f8f8f]"><span class="flex h-[25px] w-[88px] items-center gap-[7px] rounded-[4px] border border-[#cacaca] pl-[9px]"><svg width="15" height="15" stroke="#cecece" stroke-width=".9"><path d="M0 4l4-4M0 8l8-8M0 12l12-12M0 15L15 0M4 15L15 4M8 15l7-7M12 15l3-3"/></svg>Select</span><span class="flex h-[25px] w-[79px] items-center gap-[7px] rounded-[4px] border border-[#cacaca] pl-[13px]"><svg width="10" height="15"><path d="M1 1l7.500 6.500L1 14z" fill="#cdcdcd" stroke="#9e9e9e"/></svg>Filter</span></div>
      </section>
    </div>
  </main>

  <footer class="flex flex-1 items-center justify-end bg-linear-to-b from-[#efefef] to-[#dcdcdc] pr-[42px]">Force Atlas<div class="relative ml-[6px] flex h-[15px] w-[222px] rounded-[2px] bg-[#c4c4c4] pl-[168px]"><i class="w-[37px] rounded-[2px] bg-[#0a82e0]"></i></div><svg class="ml-[9px]" width="10" height="10"><use href="#x"/></svg></footer>
</div>

<!-- spreadsheet that shows behind the dock -->
<div class="absolute left-[1540px] top-[925px] z-0 flex h-[62px] w-[60px] flex-col bg-[#efefef] text-[13px]"><div class="flex h-[34px] items-center border-b border-[#bbb] pl-[18px] pt-[9px]">23</div><div class="flex h-[28px] items-center pl-[25px]">8</div></div>
<!-- dock -->
<div class="relative ml-[34px] mt-[2px] flex h-[53px] w-[1534px] shrink-0 rounded-[13px] border border-[#8a8175]/60 bg-linear-to-r from-[#57452f] via-[#5a4833] via-35% to-[#716e6a] to-42% pl-[1px]">
  <div class="grid w-[876px] shrink-0 auto-cols-[43.790px] grid-flow-col">
    <div class="flex flex-col items-center pt-[7px]"><svg width="34" height="34" viewBox="0 0 34 34"><rect width="34" height="34" rx="8" fill="#e6ebf2"/><path d="M8 0h12q-4 9-3 18h4q-1 7 0 16H8q-8 0-8-8V8q0-8 8-8z" fill="url(#gSky)"/><path d="M7 22q10 9 20 0M9 10v3M25 10v3" fill="none" stroke="#1d2b3c" stroke-width="1.500" stroke-linecap="round"/></svg><i class="mt-[5px] size-[4px] rounded-full bg-[#d9cdbf]"></i></div>
    <div class="flex flex-col items-center pt-[7px]"><svg width="34" height="34" viewBox="0 0 34 34"><rect width="34" height="34" rx="8" fill="#bdb9b3"/><rect x="6" y="7" width="6" height="6" rx="1.500" fill="#58c343"/><rect x="14" y="7" width="6" height="6" rx="1.500" fill="#f6b62c"/><rect x="22" y="7" width="6" height="6" rx="1.500" fill="#f58a25"/><rect x="6" y="15" width="6" height="6" rx="1.500" fill="#de3a34"/><rect x="14" y="15" width="6" height="6" rx="1.500" fill="#8f8f8f"/><rect x="22" y="15" width="6" height="6" rx="1.500" fill="#ea4568"/><rect x="6" y="23" width="6" height="6" rx="1.500" fill="#a450c8"/><rect x="14" y="23" width="6" height="6" rx="1.500" fill="#2a8df0"/><rect x="22" y="23" width="6" height="6" rx="1.500" fill="#4dc5b0"/></svg></div>
    <div class="relative flex flex-col items-center pt-[7px]"><svg width="34" height="34" viewBox="0 0 34 34"><rect width="34" height="34" rx="8" fill="#fff"/><circle cx="17" cy="17" r="14.500" fill="#fbc116"/><path d="M17 17L4.400 9.800A14.500 14.500 0 0 1 29.600 9.800z" fill="#e33b2e"/><path d="M4.400 9.800A14.500 14.500 0 0 0 17 31.500L23.200 20.500 17 17z" fill="#2da94f"/><circle cx="17" cy="17" r="7" fill="#fff"/><circle cx="17" cy="17" r="5.500" fill="#3d7ef0"/></svg><span class="absolute left-[27px] top-[29px] flex size-[15px] items-center justify-center rounded-full bg-[#eceff2] text-[10px] text-black">1</span><i class="mt-[5px] size-[4px] rounded-full bg-[#d9cdbf]"></i></div>
    <div class="flex flex-col items-center pt-[7px]"><svg width="34" height="34" viewBox="0 0 34 34"><rect width="34" height="34" rx="8" fill="#fff"/><g opacity=".85"><ellipse cx="17" cy="9.500" rx="4.700" ry="6.500" fill="#f6a12a"/><ellipse cx="17" cy="9.500" rx="4.700" ry="6.500" fill="#e8cf2a" transform="rotate(45 17 17)"/><ellipse cx="17" cy="9.500" rx="4.700" ry="6.500" fill="#a2cc3c" transform="rotate(90 17 17)"/><ellipse cx="17" cy="9.500" rx="4.700" ry="6.500" fill="#58bc8b" transform="rotate(135 17 17)"/><ellipse cx="17" cy="9.500" rx="4.700" ry="6.500" fill="#5c9fd8" transform="rotate(180 17 17)"/><ellipse cx="17" cy="9.500" rx="4.700" ry="6.500" fill="#8d7cc4" transform="rotate(225 17 17)"/><ellipse cx="17" cy="9.500" rx="4.700" ry="6.500" fill="#c977a8" transform="rotate(270 17 17)"/><ellipse cx="17" cy="9.500" rx="4.700" ry="6.500" fill="#ee5a46" transform="rotate(315 17 17)"/></g></svg></div>
    <div class="flex flex-col items-center pt-[7px]"><svg width="34" height="34" viewBox="0 0 34 34"><rect width="34" height="34" rx="8" fill="#ebebeb"/><circle cx="17" cy="17" r="14.500" fill="url(#gSky)"/><circle cx="17" cy="17" r="12.500" fill="none" stroke="#bfe3fb" stroke-dasharray="1 1.600"/><path d="M27 7L19 19l-4-4z" fill="#f0503e"/><path d="M7 27l8-12 4 4z" fill="#f4f4f4"/></svg></div>
    <div class="flex flex-col items-center pt-[7px]"><svg width="35" height="34" viewBox="0 0 34 34"><circle cx="17" cy="17" r="17" fill="#1ed660"/><path d="M7 11.500q11-3 20 2.500M8 17q9.500-2.500 17 2M9 22.500q8-2 14 1.800" fill="none" stroke="#111" stroke-width="2.600" stroke-linecap="round"/></svg><i class="mt-[5px] size-[4px] rounded-full bg-[#d9cdbf]"></i></div>
    <div class="flex flex-col items-center pt-[7px]"><svg width="34" height="34" viewBox="0 0 34 34"><rect width="34" height="34" rx="8" fill="#0f8bee"/><circle cx="17" cy="17" r="13.500" fill="#fff"/><path d="M5 17l7-5v3.500h10V12l7 5-7 5v-3.500H12V22z" fill="#0f7fe0"/></svg></div>
    <div class="flex flex-col items-center pt-[5px]"><svg width="37" height="38" viewBox="0 0 37 38"><circle cx="18.500" cy="19" r="18.500" fill="#fff"/><path d="M12 14q1.500-6 6.500-6.500 5 .5 6.500 6.500zM13 6l2 3M24 6l-2 3" fill="#35c072" stroke="#35c072"/><rect x="9" y="14" width="18" height="13" rx="1" fill="#3f7df0"/><path d="M20 12v5M20 16l-5 13M20 16l5 13M15.500 24h8" stroke="#10233c" stroke-width="2.600" fill="none"/></svg></div>
    <div class="flex flex-col items-center pt-[8px]"><svg width="33" height="33" viewBox="0 0 33 33"><rect x="1" y="1" width="31" height="31" rx="7" fill="#121816" stroke="#a9a7a4" stroke-width="1.500"/><path d="M3 10h27M3 23h27M10 3v27M23 3v27" stroke="#2d4640" stroke-width=".7"/><path d="M3 17h5l1-4 1 4 .5-10 2 19 1.500-8 2-4 2 5 2-2 1 1h9" fill="none" stroke="#4f9c88" stroke-width="1.100"/></svg></div>
    <div class="flex flex-col items-center pt-[5px]"><svg width="38" height="38" viewBox="0 0 38 38"><rect x="2" y="2" width="33" height="34" rx="8" fill="url(#gSky)"/><path d="M9 26L18 9M14 9l8 16M6 23h26M11 31h16" stroke="#8fcfff" stroke-width="1.800" fill="none"/><path d="M15 36l9-28" stroke="#2c323a" stroke-width="4"/><path d="M19 3q8-5 14 1l5 3-1 4-4-3-11-2z" fill="#4b5158"/></svg></div>
    <div class="flex flex-col items-center pt-[7px]"><svg width="34" height="34" viewBox="0 0 34 34"><rect width="34" height="34" rx="8" fill="url(#gGreen)"/><path d="M5.500 28.500l1.700-6a11.200 11.200 0 1 1 4.300 4.200z" fill="none" stroke="#fff" stroke-width="2.500"/><path d="M12.500 10.500q2-1.500 3 1.500t-.8 3.500q1 3 4.300 4.200 2-3 4-1.500t1 3q-2 3-6.500 1.500-5-2-7-6.800-1-3.400 2-5.400z" fill="#fff"/></svg><i class="mt-[5px] size-[4px] rounded-full bg-[#d9cdbf]"></i></div>
    <div class="flex flex-col items-center pt-[7px]"><svg width="34" height="34" viewBox="0 0 34 34"><rect width="34" height="34" rx="8" fill="#fff"/><circle cx="17" cy="17" r="14.500" fill="#2fa3e2"/><path d="M7 17l18-7-3 15-6-4-3 3-.5-5 8-6.500-10 6z" fill="#fff"/></svg></div>
    <div class="flex flex-col items-center pt-[3px]"><svg width="36" height="42" viewBox="0 0 36 42" fill="#9cb930"><path d="M8 16q1-8 9-8t9 8zM8 18h18v14q0 2-2 2H10q-2 0-2-2zM10 33h4.500v6q0 2-2.200 2T10 39zM19 33h4.500v6q0 2-2.200 2T19 39zM2 20q0-2 2-2t2 2v8q0 2-2 2t-2-2z"/><path d="M26 20q5 1 5-4" stroke="#9cb930" stroke-width="3" fill="none"/><path d="M11 6l2 3M23 6l-2 3" stroke="#9cb930"/><rect x="26" y="4" width="9" height="13" rx="1"/><path d="M28 1h5v4h-5z"/><path d="M30.500 6v9M28 9v2l2.500 2 2.500-2V9" stroke="#eef3d0" fill="none"/><circle cx="13.500" cy="12.500" r="1" fill="#fff"/><circle cx="20.500" cy="12.500" r="1" fill="#fff"/></svg></div>
    <div class="flex flex-col items-center pt-[7px]"><svg width="35" height="36" viewBox="0 0 35 36"><rect width="34" height="34" rx="8" fill="url(#gSky)"/><rect x="2" y="2" width="30" height="30" rx="6" fill="none" stroke="#7cc6fb" stroke-width=".8"/><path d="M9 25L17 8M13 8l8 16M5 22h18" stroke="#a6daff" stroke-width="2" fill="none"/><path d="M25 8l10 4-10 24-10-5z" fill="#14161a"/><path d="M20 21l8 3M26 19l-3 7" stroke="#ddd" stroke-width="2.200"/></svg><i class="mt-[3px] size-[4px] rounded-full bg-[#e5e2de]"></i></div>
    <div class="flex flex-col items-center pt-[5px]"><svg width="34" height="40"><use href="#vlc"/></svg></div>
    <div class="flex flex-col items-center pt-[7px]"><svg width="34" height="34" viewBox="0 0 34 34"><rect width="34" height="34" rx="8" fill="#0c9af5"/><g font-family="Open Sans" font-weight="bold" font-size="8.500" fill="#0a1b36" text-anchor="middle"><text x="17" y="13">prime</text><text x="17" y="21">video</text></g><path d="M8 24q9 5 17 0M23 23.500l3-.5-.5 3" fill="none" stroke="#0a1b36" stroke-width="1.500"/></svg></div>
    <div class="flex flex-col items-center pt-[7px]"><svg width="34" height="34" viewBox="0 0 34 34"><rect width="34" height="34" rx="8" fill="#fff"/><path d="M23 5l6 2.500v19L23 29 11 18l-4 3.500-2-1.500V14l2-1.500 4 3.500zM23 12l-6 5 6 5z" fill="#1f82cc" fill-rule="evenodd"/><path d="M5.500 20.500L23 5" stroke="#1668ab" stroke-width="3"/></svg><i class="mt-[5px] size-[4px] rounded-full bg-[#e5e2de]"></i></div>
    <div class="flex flex-col items-center pt-[7px]"><svg width="34" height="34" viewBox="0 0 34 34"><rect width="34" height="34" rx="8" fill="url(#gSky)"/><path d="M19 7l-8.500 15M8.500 25.500l-1 2M15 7l11 20M5.500 22h14M24.500 22h4" stroke="#fff" stroke-width="2.700" stroke-linecap="round" fill="none"/></svg></div>
    <div class="flex flex-col items-center pt-[7px]"><svg width="34" height="34" viewBox="0 0 34 34"><rect x="1" y="1" width="32" height="32" rx="7.500" fill="#1d1e20" stroke="#c6c6c6" stroke-width="1.800"/><path d="M6 6.500l3.500 2.500L6 11.500M12 13h5" stroke="#f2f2f2" stroke-width="1.400" fill="none"/></svg><i class="mt-[5px] size-[4px] rounded-full bg-[#e5e2de]"></i></div>
    <div class="relative flex flex-col items-center pt-[7px]"><svg width="34" height="34" viewBox="0 0 34 34"><rect width="34" height="34" rx="8" fill="#b0b1b2"/><circle cx="17" cy="17" r="13.500" fill="none" stroke="#3c3e40" stroke-width="2.500" stroke-dasharray="2 .8"/><circle cx="17" cy="17" r="10.500" fill="#8a8c8d" stroke="#3c3e40" stroke-width="2"/><circle cx="17" cy="17" r="3" fill="#b0b1b2" stroke="#3c3e40" stroke-width="1.800"/><path d="M20 17h7M15.500 14.500L12 8M15.500 19.500L12 26" stroke="#3c3e40" stroke-width="2"/></svg><span class="absolute left-[28px] top-[3px] flex size-[16px] items-center justify-center rounded-full bg-[#f23b36] text-[10px] text-white">1</span></div>
  </div>
  <i class="ml-[9px] mt-[6px] h-[40px] w-px bg-[#a5a29e]"></i>
  <div class="ml-[8px] grid w-[263px] shrink-0 auto-cols-[43.790px] grid-flow-col">
    <div class="flex flex-col items-center pt-[7px]"><svg width="34" height="34" viewBox="0 0 34 34"><rect width="34" height="34" rx="8" fill="url(#gGreen)"/><path d="M6 23h4v6H6zM12 18h4v11h-4zM18 5h4v24h-4zM24 11h4v18h-4z" fill="#fff"/></svg><i class="mt-[5px] size-[4px] rounded-full bg-[#eceae7]"></i></div>
    <div class="flex flex-col items-center pt-[7px]"><svg width="34" height="34" viewBox="0 0 34 34"><rect width="34" height="34" rx="2" fill="#ef4036"/><path d="M6 17l7-7 7 7-7 7zM17 12l2-2 8 7-8 7-2-2 4-5z" fill="#fff"/></svg><i class="mt-[5px] size-[4px] rounded-full bg-[#eceae7]"></i></div>
    <div class="flex flex-col items-center pt-[7px]"><svg width="34" height="35" viewBox="0 0 34 35"><rect x=".7" y=".7" width="32.600" height="32.600" rx="7" fill="#a5c2f2" stroke="#f2f2f2" stroke-width="1.400"/><path d="M1.500 21h31v5q0 6-6 6h-19q-6 0-6-6z" fill="#e5ddcd"/><path d="M1.500 18.500h31v3h-31z" fill="#386098"/><path d="M19 17h11l3 17H17z" fill="#c4c8cc"/><path d="M19 17h12l1 7H18z" fill="#23262b"/><path d="M20 29h9" stroke="#444" stroke-width="1.500"/></svg><i class="mt-[4px] size-[4px] rounded-full bg-[#eceae7]"></i></div>
    <div class="flex flex-col items-center pt-[5px]"><svg width="34" height="39"><use href="#vlc"/></svg><i class="mt-[2px] size-[4px] rounded-full bg-[#eceae7]"></i></div>
    <div class="flex flex-col items-center pt-[6px]"><svg width="35" height="36" viewBox="0 0 34 34"><rect width="34" height="34" fill="#f5f6f8"/><use href="#tab"/></svg><i class="mt-[4px] size-[4px] rounded-full bg-[#eceae7]"></i></div>
    <div class="flex flex-col items-center pt-[8px] text-white"><svg width="33" height="33" viewBox="0 0 33 33"><rect width="33" height="33" rx="8" fill="#151516"/><use href="#gephi" x="2" y="3" width="29" height="28"/></svg><i class="mt-[5px] size-[4px] rounded-full bg-[#eceae7]"></i></div>
  </div>
  <i class="ml-[9px] mt-[6px] h-[40px] w-px bg-[#a5a29e]"></i>
  <svg class="ml-[9px]" width="350" height="50" viewBox="1212 942 350 50">
    <path d="M1216 954h38v24h-38z" fill="#f0f0f0"/><path d="M1216 954h38v3h-38zM1246 954h8v24h-8z" fill="#343434"/><path d="M1218 961h26M1218 965h26M1218 969h26M1218 973h26M1224 958v19M1231 958v19M1238 958v19" stroke="#c5c5cb" stroke-width=".8"/><rect x="1241" y="972" width="13" height="12" rx="3" fill="url(#gGreen)"/><path d="M1244.500 981v-3M1247.500 981v-6M1250.500 981v-5" stroke="#fff" stroke-width="1.500"/>
    <path d="M1259 955h39v22h-39z" fill="#f5f8fa"/><path d="M1276 959l5-1 3 2 0 4-3 4-5-2-1-4z" fill="#2e5f94"/><path d="M1265 969h12v7h-12z" fill="#4bb9c4"/><path d="M1261 959h8M1288 961h7M1261 963h6" stroke="#8fcbd8"/><rect x="1284" y="973" width="12" height="11" fill="#f2f5f8"/><use href="#tab" x="1284" y="973" width="12" height="11"/>
    <path d="M1304 951h38v30h-38z" fill="#fafafa"/><path d="M1304 951h38v2h-38z" fill="#444"/><path d="M1323 956v20M1320.500 962h5v5h-5z" stroke="#c3ccd3" fill="none"/><use href="#pv" x="1329" y="973" width="13" height="12"/>
    <path d="M1347 951h38v30h-38z" fill="#fafafa"/><path d="M1347 951h38v2h-38z" fill="#444"/><path d="M1382 957v20M1352 979h3M1358 979.500h8" stroke="#2e77b8" stroke-width="1.200"/><use href="#pv" x="1372" y="973" width="13" height="12"/>
    <path d="M1390 953h38v26h-38z" fill="#fafafa"/><path d="M1390 953h38v2h-38z" fill="#444"/><path d="M1395 957v20" stroke="#777" stroke-width="3" stroke-dasharray="1 1"/><path d="M1400 977l6-5 7-4 6-6 7-4" stroke="#7aa6c8" fill="none"/><use href="#pv" x="1415" y="973" width="13" height="12"/>
    <path d="M1436 947h36v38h-36z" fill="#fafafa"/><path d="M1436 947h36v2h-36z" fill="#444"/><path d="M1441 975v-8M1444 975v-16M1447 975v-6M1451 975v-4M1454 975v-12M1457 975v-22M1460 975v-16M1463 975v-19M1467 975v-23" stroke="#3f80b8" stroke-width="1.700"/><path d="M1440 979h28" stroke="#999" stroke-width="6" stroke-dasharray="1 1"/><use href="#pv" x="1459" y="973" width="13" height="12"/>
    <path d="M1478 955h38v22h-38z" fill="#131a35"/><path d="M1478 955h7v22h-7z" fill="#090b14"/><path d="M1490 957.500h16" stroke="#5a76cc" stroke-width="2"/><path d="M1487 963h8M1487 967h10M1487 971h8" stroke="#33457e" stroke-width="1.300"/><circle cx="1509" cy="978" r="6.800" fill="#1ed660"/><path d="M1505 976q4-1 8 1M1505.500 978.500q3.500-1 7 .7M1506 981q3-.7 5.500.5" stroke="#0f3a1d" fill="none"/>
    <path d="M1527 953h27l-3.500 29q-.5 2-3 2h-14q-2.500 0-3-2z" fill="url(#gTrash)"/><path d="M1526 953q1-6 7-5 3-3 7 0 5-3 8 0 6 0 7 5-14 5-29 0z" fill="#ebe7e2"/><path d="M1532 951h3M1538 949l3 2M1546 952h3" stroke="#c05a48" stroke-width="1.500"/><path d="M1535 953h4M1543 949h3" stroke="#4a8a60" stroke-width="1.500"/>
  </svg>
</div>

<script>
// force-directed disc: sparse rim, clustered belt, overlapping core, faint spokes toward the centre
const g = document.getElementById('graph').getContext('2d');
let s = 12345;
const rnd = () => ((s = (s * 1664525 + 1013904223) >>> 0) / 4294967296);
const cx = 518, cy = 358, R = 345, nodes = [], grid = {};
function place(x, y, d) {
  const k = 14, gx = Math.floor(x / k), gy = Math.floor(y / k);
  for (let i = -1; i <= 1; i++) for (let j = -1; j <= 1; j++)
    for (const n of grid[(gx + i) + ',' + (gy + j)] || [])
      if ((n[0] - x) ** 2 + (n[1] - y) ** 2 < d * d) return;
  const n = [x, y];
  (grid[gx + ',' + gy] ||= []).push(n);
  nodes.push(n);
}
// uneven belt thickness by direction
const wave = t => 3 * Math.sin(7 * t + 1) + 4 * Math.sin(19 * t + 2) + 6 * Math.sin(37 * t) + 7 * Math.sin(61 * t + 4);
let a = 0;
while (a < Math.PI * 2 - 0.02) {
  const r = R - rnd() * rnd() * 10;
  place(cx + r * Math.cos(a), cy + r * Math.sin(a), 10);
  a += (14 + rnd() * 5) / R;
}
for (let i = 0; i < 6000; i++) {
  const t = rnd() * Math.PI * 2, r = 290 + rnd() * (R - 301);
  place(cx + r * Math.cos(t), cy + r * Math.sin(t), r > 318 ? 12.5 : 10);
}
for (let i = 0; i < 20000; i++) {
  const t = rnd() * Math.PI * 2, r = Math.sqrt(rnd()) * 312, e = r + wave(t);
  const p = e < 236 ? 1 : e < 258 ? 0.45 : e < 280 ? 0.26 : e < 298 ? 0.16 : 0.05;
  if (rnd() < p) place(cx + r * Math.cos(t), cy + r * Math.sin(t), e < 240 ? 2.8 : 3.4);
}
g.lineWidth = 0.7;
for (const [x, y] of nodes) {
  const r = Math.hypot(x - cx, y - cy);
  const q = r < 230 ? 0.75 : 0.6 + rnd() * 0.15, w = (rnd() - 0.5) * 40;
  g.strokeStyle = r < 230 ? '#a0a0a0' : '#d4d4d4';
  g.beginPath(); g.moveTo(x, y); g.lineTo(cx + (x - cx) * q + w * (y - cy) / r, cy + (y - cy) * q - w * (x - cx) / r); g.stroke();
}
g.fillStyle = '#9c9c9c';
g.beginPath(); g.arc(cx, cy, 205, 0, 7); g.fill();
for (let i = nodes.length - 1; i > 0; i--) { const j = Math.floor(rnd() * (i + 1)); [nodes[i], nodes[j]] = [nodes[j], nodes[i]]; }
g.fillStyle = '#c0c0c0';
g.strokeStyle = '#5e5e5e';
g.lineWidth = 0.9;
for (const [x, y] of nodes) { g.beginPath(); g.arc(x, y, 4.8, 0, 7); g.fill(); g.stroke(); }
</script>
</body>
</html>
